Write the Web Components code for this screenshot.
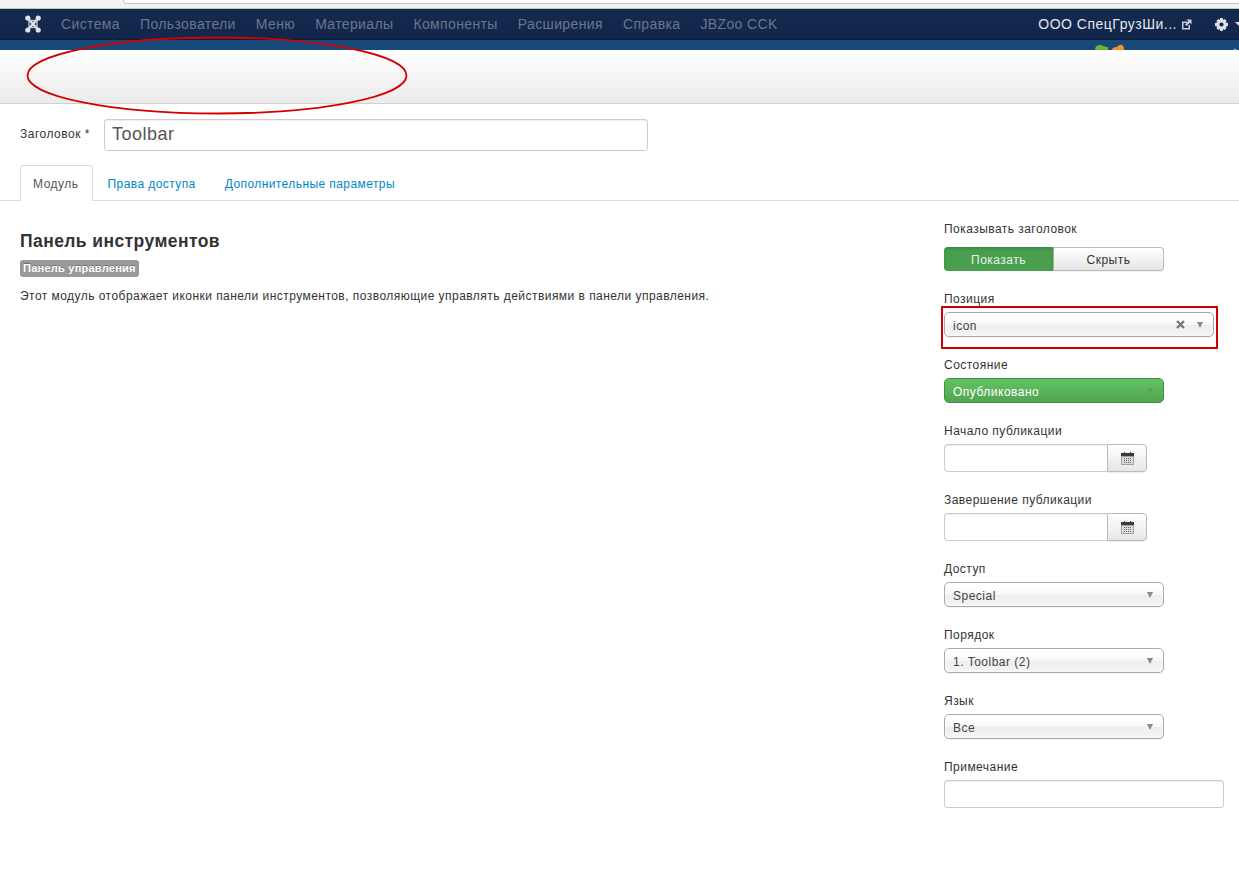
<!DOCTYPE html>
<html lang="ru">
<head>
<meta charset="utf-8">
<title>Toolbar</title>
<style>
    html, body { margin: 0; padding: 0; background: #fff; }
    body { font-family: "Liberation Sans", Arial, sans-serif; font-size: 12px; color: #333; position: relative; width: 1239px; height: 888px; overflow: hidden; }
</style>
</head>
<body>
<browser-strip></browser-strip>
<admin-navbar>
    <nav-link>Система</nav-link>
    <nav-link>Пользователи</nav-link>
    <nav-link>Меню</nav-link>
    <nav-link>Материалы</nav-link>
    <nav-link>Компоненты</nav-link>
    <nav-link>Расширения</nav-link>
    <nav-link>Справка</nav-link>
    <nav-link>JBZoo CCK</nav-link>
</admin-navbar>
<brand-bar></brand-bar>
<sub-head></sub-head>
<title-row label="Заголовок *" value="Toolbar"></title-row>
<tab-bar>
    <tab-item active>Модуль</tab-item>
    <tab-item>Права доступа</tab-item>
    <tab-item>Дополнительные параметры</tab-item>
</tab-bar>
<module-page>
    <module-info slot="main"></module-info>
    <form-field slot="side" label="Показывать заголовок" gap="8"><yes-no></yes-no></form-field>
    <form-field slot="side" label="Позиция"><pick-list value="icon" wide clear></pick-list></form-field>
    <form-field slot="side" label="Состояние"><pick-list value="Опубликовано" green></pick-list></form-field>
    <form-field slot="side" label="Начало публикации"><date-input></date-input></form-field>
    <form-field slot="side" label="Завершение публикации"><date-input></date-input></form-field>
    <form-field slot="side" label="Доступ"><pick-list value="Special"></pick-list></form-field>
    <form-field slot="side" label="Порядок"><pick-list value="1. Toolbar (2)"></pick-list></form-field>
    <form-field slot="side" label="Язык"><pick-list value="Все"></pick-list></form-field>
    <form-field slot="side" label="Примечание"><note-input></note-input></form-field>
</module-page>
<red-marks></red-marks>

<script>
    // small helper, every element only needs its markup
    function shadow(el, html) {
        el.attachShadow({mode: 'open'}).innerHTML = html;
    }

    class BrowserStrip extends HTMLElement {
        connectedCallback() {
            shadow(this, `<style>
                :host { display: block; height: 9px; box-sizing: border-box; background: #f2f2f2; border-bottom: 1px solid #c4c4c4; padding-left: 123px; }
                .url { height: 3px; background: #fff; border: 1px solid #c8c8c8; border-top: 0; border-radius: 0 0 3px 3px; margin-right: -2px; }
            </style><div class="url"></div>`);
        }
    }
    customElements.define('browser-strip', BrowserStrip);

    class AdminNavbar extends HTMLElement {
        connectedCallback() {
            shadow(this, `<style>
                :host { display: flex; align-items: center; height: 31px; box-sizing: border-box; background: linear-gradient(#132a50, #13264a); border-bottom: 1px solid #0d1c38; padding-left: 25px; overflow: hidden; color: #ddd; }
                .logo { width: 16px; height: 18px; margin-right: 10px; flex: none; }
                .menu { display: flex; flex: 1; }
                .user { font-size: 14px; color: #e4e7ec; white-space: nowrap; letter-spacing: .5px; }
                .ext { margin-left: 4px; margin-right: 23px; flex: none; }
                .gear { margin-right: 7px; flex: none; }
                .caret { width: 0; height: 0; border: 4px solid transparent; border-top-color: #ddd; border-bottom: 0; flex: none; margin-right: -4px; }
            </style>
            <svg class="logo" viewBox="0 0 16 18">
                <path d="M3 3.5 L13 14.5 M13 3.5 L3 14.5" fill="none" stroke="#dfe2e6" stroke-width="2.6"/>
                <rect x="4" y="5.5" width="8" height="7" fill="none" stroke="#c9ced6" stroke-width="1.3"/>
                <g fill="#dfe2e6">
                    <circle cx="2.8" cy="3" r="2.6"/><circle cx="13.2" cy="3" r="2.6"/>
                    <circle cx="2.8" cy="15" r="2.6"/><circle cx="13.2" cy="15" r="2.6"/>
                </g>
            </svg>
            <div class="menu"><slot></slot></div>
            <span class="user">ООО СпецГрузШи...</span>
            <svg class="ext" width="11" height="11" viewBox="0 0 11 11">
                <path d="M1 2.5 H6 V4 H2.5 V9 H7.5 V6 H9 V10.5 H1 Z" fill="#c9ced6"/>
                <path d="M5.5 0.5 H10.5 V5.5 L8.8 3.8 L5.6 7 L4 5.4 L7.2 2.2 Z" fill="#c9ced6"/>
            </svg>
            <svg class="gear" width="13" height="13" viewBox="0 0 13 13">
                <path fill="#dfe2e6" fill-rule="evenodd" d="M5.2 0 H7.8 L8.2 1.9 L9.7 1 L11.6 2.9 L10.7 4.4 L13 5 V8 L10.8 8.5 L11.6 10.1 L9.7 12 L8.2 11.1 L7.8 13 H5.2 L4.8 11.1 L3.3 12 L1.4 10.1 L2.3 8.5 L0 8 V5 L2.3 4.4 L1.4 2.9 L3.3 1 L4.8 1.9 Z M6.5 4.4 A2.1 2.1 0 1 0 6.5 8.6 A2.1 2.1 0 1 0 6.5 4.4 Z"/>
            </svg>
            <span class="caret"></span>`);
        }
    }
    customElements.define('admin-navbar', AdminNavbar);

    class NavLink extends HTMLElement {
        connectedCallback() {
            shadow(this, `<style>
                :host { display: block; padding: 0 10px; font-size: 14px; line-height: 20px; color: #6b768c; white-space: nowrap; letter-spacing: .37px; }
            </style><slot></slot>`);
        }
    }
    customElements.define('nav-link', NavLink);

    class BrandBar extends HTMLElement {
        connectedCallback() {
            shadow(this, `<style>
                :host { display: block; height: 10px; background: #17497b; overflow: hidden; padding-left: 1095px; }
                svg { display: block; }
            </style>
            <svg width="144" height="10" viewBox="0 0 144 10">
                <path d="M0 10 C0 7 2 5 5 5 C8 5 9 7 13 7 L13 10 Z" fill="#6fb52c"/>
                <path d="M17 10 C17 8 19 7 22 7 C23 5 26 4.5 27 5 C29 6 29 8 29 10 Z" fill="#f78e2e"/>
                <circle cx="140" cy="10" r="1.5" fill="#9fb2c6"/>
            </svg>`);
        }
    }
    customElements.define('brand-bar', BrandBar);

    class SubHead extends HTMLElement {
        connectedCallback() {
            shadow(this, `<style>
                :host { display: block; height: 54px; box-sizing: border-box; background: linear-gradient(#fff, #ebebeb); border-bottom: 1px solid #d0d0d0; }
            </style>`);
        }
    }
    customElements.define('sub-head', SubHead);

    class TitleRow extends HTMLElement {
        connectedCallback() {
            shadow(this, `<style>
                :host { display: flex; align-items: flex-start; padding: 15px 0 0 20px; }
                label { width: 84px; flex: none; font-size: 12px; line-height: 20px; margin-top: 5px; color: #333; letter-spacing: .5px; }
                .box { width: 544px; height: 32px; box-sizing: border-box; border: 1px solid #ccc; border-radius: 3px; padding-left: 7px; font-size: 18px; line-height: 28px; color: #555; box-shadow: inset 0 1px 1px rgba(0,0,0,.07); letter-spacing: .5px; }
            </style>
            <label>${this.getAttribute('label')}</label>
            <div class="box">${this.getAttribute('value')}</div>`);
        }
    }
    customElements.define('title-row', TitleRow);

    class TabBar extends HTMLElement {
        connectedCallback() {
            shadow(this, `<style>
                :host { display: flex; height: 36px; box-sizing: border-box; margin-top: 14px; padding-left: 20px; border-bottom: 1px solid #ddd; }
            </style><slot></slot>`);
        }
    }
    customElements.define('tab-bar', TabBar);

    class TabItem extends HTMLElement {
        connectedCallback() {
            shadow(this, `<style>
                :host { display: block; height: 36px; box-sizing: border-box; padding: 0 12px; margin-right: 3px; border: 1px solid transparent; border-bottom: 0; border-radius: 4px 4px 0 0; font-size: 12px; line-height: 37px; color: #08c; white-space: nowrap; letter-spacing: .42px; }
                :host([active]) { color: #555; background: #fff; border-color: #ddd; padding-right: 13px; margin-right: 2px; letter-spacing: .5px; }
            </style><slot></slot>`);
        }
    }
    customElements.define('tab-item', TabItem);

    class ModulePage extends HTMLElement {
        connectedCallback() {
            shadow(this, `<style>
                :host { display: grid; grid-template-columns: 924px 280px; padding: 18px 0 0 20px; }
            </style>
            <div><slot name="main"></slot></div>
            <div><slot name="side"></slot></div>`);
        }
    }
    customElements.define('module-page', ModulePage);

    class ModuleInfo extends HTMLElement {
        connectedCallback() {
            shadow(this, `<style>
                :host { display: block; padding-top: 11px; }
                h3 { margin: 0; font-size: 17.5px; line-height: 22px; font-weight: bold; color: #333; letter-spacing: .42px; }
                .badge { display: inline-block; margin-top: 8px; padding: 0 3px; height: 17px; line-height: 17px; background: #999; border-radius: 3px; color: #fff; font-size: 11px; font-weight: bold; text-shadow: 0 -1px 0 rgba(0,0,0,.25); letter-spacing: .24px; }
                p { margin: 10px 0 0; font-size: 12px; line-height: 18px; color: #333; letter-spacing: .46px; }
            </style>
            <h3>Панель инструментов</h3>
            <div class="badge">Панель управления</div>
            <p>Этот модуль отображает иконки панели инструментов, позволяющие управлять действиями в панели управления.</p>`);
        }
    }
    customElements.define('module-info', ModuleInfo);

    class FormField extends HTMLElement {
        connectedCallback() {
            const gap = this.getAttribute('gap') || 3;
            shadow(this, `<style>
                :host { display: block; margin-bottom: 18px; }
                label { display: block; font-size: 12px; line-height: 20px; color: #333; margin-bottom: ${gap}px; letter-spacing: .46px; }
            </style>
            <label>${this.getAttribute('label')}</label>
            <slot></slot>`);
        }
    }
    customElements.define('form-field', FormField);

    class YesNo extends HTMLElement {
        connectedCallback() {
            shadow(this, `<style>
                :host { display: flex; width: 220px; height: 24px; font-size: 12px; letter-spacing: .48px; }
                div { flex: 1; box-sizing: border-box; text-align: center; line-height: 26px; }
                .on { background: #4a9f4e; color: #e8f4e8; border-radius: 4px 0 0 4px; box-shadow: inset 0 2px 3px rgba(0,0,0,.15); border-right: 1px solid #9ab89a; }
                .off { color: #333; background: linear-gradient(#fff, #e6e6e6); border: 1px solid #bbb; border-left: 0; border-radius: 0 4px 4px 0; line-height: 25px; box-shadow: 0 1px 1px rgba(0,0,0,.06); }
            </style>
            <div class="on">Показать</div><div class="off">Скрыть</div>`);
        }
    }
    customElements.define('yes-no', YesNo);

    class PickList extends HTMLElement {
        connectedCallback() {
            shadow(this, `<style>
                :host { display: flex; align-items: center; width: 220px; height: 25px; box-sizing: border-box; padding: 0 10px 0 8px; border: 1px solid #aaa; border-radius: 5px; background: linear-gradient(#fff 20%, #f6f6f6 50%, #eee 52%, #f4f4f4 100%); box-shadow: 0 1px 0 rgba(0,0,0,.05), inset 0 0 3px #fff; font-size: 12px; color: #444; letter-spacing: .5px; }
                :host([wide]) { width: 270px; }
                :host([green]) { background: linear-gradient(#62c462, #51a351); border-color: #3f8f3f; color: #fff; box-shadow: none; }
                span { flex: 1; white-space: nowrap; padding-top: 2px; }
                svg { flex: none; margin-right: 12px; }
                i { flex: none; width: 0; height: 0; border-left: 3.5px solid transparent; border-right: 3.5px solid transparent; border-top: 6px solid #888; margin-top: 1px; }
                :host([green]) i { border-top-color: #5f9a62; }
            </style>
            <span>${this.getAttribute('value')}</span>
            ${this.hasAttribute('clear') ? `<svg width="9" height="9" viewBox="0 0 9 9"><path d="M1 1 L8 8 M8 1 L1 8" stroke="#777" stroke-width="2.4"/></svg>` : ''}
            <i></i>`);
        }
    }
    customElements.define('pick-list', PickList);

    class DateInput extends HTMLElement {
        connectedCallback() {
            shadow(this, `<style>
                :host { display: flex; width: 203px; height: 28px; }
                .box { flex: 1; box-sizing: border-box; border: 1px solid #ccc; border-right: 0; border-radius: 4px 0 0 4px; box-shadow: inset 0 1px 1px rgba(0,0,0,.07); }
                .btn { width: 40px; box-sizing: border-box; display: flex; align-items: center; justify-content: center; border: 1px solid #bbb; border-radius: 0 4px 4px 0; background: linear-gradient(#fff, #e6e6e6); box-shadow: 0 1px 1px rgba(0,0,0,.08); }
            </style>
            <div class="box"></div>
            <div class="btn">
                <svg width="13" height="13" viewBox="0 0 13 13">
                    <rect x="0" y="2" width="13" height="11" fill="#a3a3a3"/>
                    <rect x="0" y="1" width="13" height="3" fill="#3b3b3b"/>
                    <rect x="3" y="0" width="1" height="2" fill="#3b3b3b"/>
                    <rect x="9" y="0" width="1" height="2" fill="#3b3b3b"/>
                    <rect x="1" y="5" width="11" height="7" fill="#dcdcdc"/>
                    <path d="M3 6.5 H11 M3 8.5 H11 M3 10.5 H11" stroke="#666" stroke-width="1" stroke-dasharray="1 1"/>
                </svg>
            </div>`);
        }
    }
    customElements.define('date-input', DateInput);

    class NoteInput extends HTMLElement {
        connectedCallback() {
            shadow(this, `<style>
                :host { display: block; width: 280px; height: 28px; box-sizing: border-box; border: 1px solid #ccc; border-radius: 3px; box-shadow: inset 0 1px 1px rgba(0,0,0,.07); }
            </style>`);
        }
    }
    customElements.define('note-input', NoteInput);

    // hand drawn annotations lying over the screenshot
    class RedMarks extends HTMLElement {
        connectedCallback() {
            shadow(this, `<style>
                :host { position: absolute; left: 0; top: 0; width: 1239px; height: 888px; pointer-events: none; }
                svg { position: absolute; left: 0; top: 0; }
                .rect { position: absolute; left: 941px; top: 306px; width: 277px; height: 43px; box-sizing: border-box; border: 2px solid #c00; }
            </style>
            <svg width="1239" height="200"><ellipse cx="217" cy="75.5" rx="189.5" ry="38" fill="none" stroke="#d40000" stroke-width="1.8"/></svg>
            <div class="rect"></div>`);
        }
    }
    customElements.define('red-marks', RedMarks);
</script>
</body>
</html>
